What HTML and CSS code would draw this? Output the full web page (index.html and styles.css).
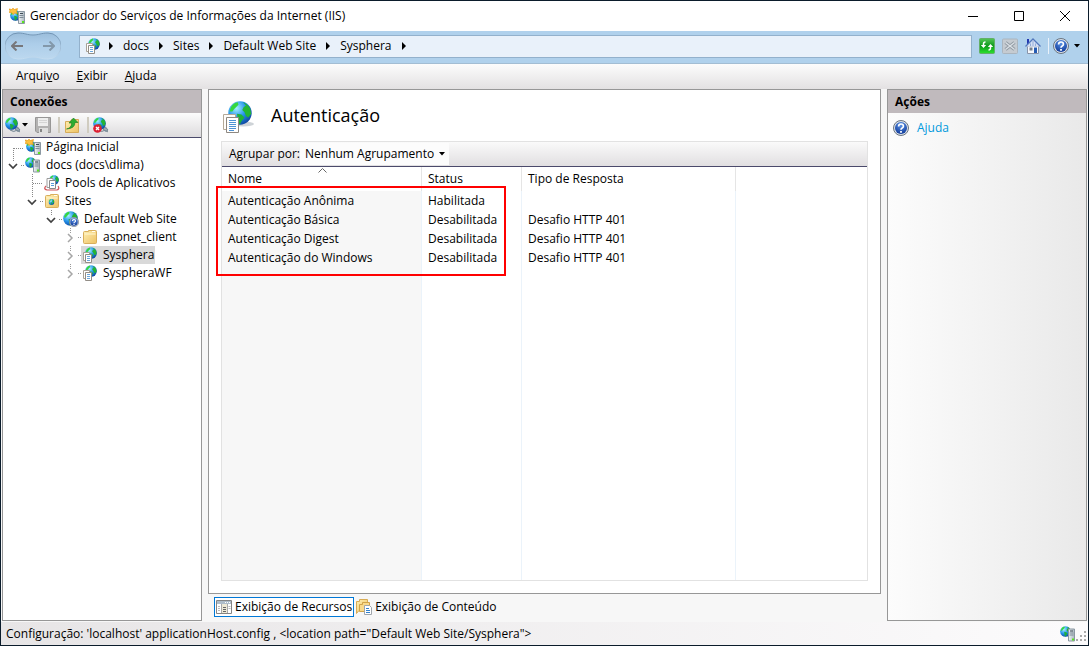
FILE: index.html
```html
<!DOCTYPE html>
<html lang="pt-BR">
<head>
<meta charset="utf-8">
<title>Gerenciador do Serviços de Informações da Internet (IIS)</title>
<link rel="stylesheet" href="styles.css">
</head>
<body>
<svg class="defs" aria-hidden="true">
  <defs>
    <radialGradient id="sea" cx=".35" cy=".3" r=".8"><stop offset="0" stop-color="#a5f0ff"/><stop offset=".5" stop-color="#2493ea"/><stop offset="1" stop-color="#0b3b94"/></radialGradient>
    <radialGradient id="blue" cx=".5" cy=".25" r=".8"><stop offset="0" stop-color="#5d95e8"/><stop offset="1" stop-color="#0b3494"/></radialGradient>
    <linearGradient id="gold" x2="1" y2="1"><stop offset="0" stop-color="#fff0b4"/><stop offset="1" stop-color="#edc163"/></linearGradient>
    <linearGradient id="steel"><stop offset="0" stop-color="#f0f4f7"/><stop offset="1" stop-color="#a9b5be"/></linearGradient>
    <linearGradient id="green" y2="1" x2="0"><stop offset="0" stop-color="#55c558"/><stop offset=".5" stop-color="#0c9a1b"/><stop offset="1" stop-color="#2be32e"/></linearGradient>
    <linearGradient id="well" y2="1" x2="0"><stop offset="0" stop-color="#9bbddb"/><stop offset=".4" stop-color="#accde9"/><stop offset="1" stop-color="#bcd8ef"/></linearGradient>
    <linearGradient id="rim" y2="1" x2="0"><stop offset="0" stop-color="#6f92b2"/><stop offset="1" stop-color="#c5ddf1"/></linearGradient>
    <symbol id="globe" viewBox="0 0 16 16">
      <circle cx="8" cy="8" r="7.800" fill="url(#sea)"/>
      <path d="M2 4Q4 1 6.500.8L7 2.500 5.500 4 4 5.500 3 7 1 7Z" fill="#35d83e"/>
      <path d="M10 .8Q13 1.800 14.800 5L15.500 8.500 13.500 11 12 10 11 7.500 9.500 6 10.500 4 12 3Z" fill="#23b534"/>
      <path d="M6 8.500l3 .5 2 2-2 2.500-1 2Q6 14 6.500 12Z" fill="#1fb13a"/>
    </symbol>
    <symbol id="tower" viewBox="0 0 7 13">
      <path d="M.5.5h6v12h-6z" fill="url(#steel)" stroke="#8b98a2"/>
      <path d="M2 2.500h3" stroke="#3e4c56"/><path d="M1.500 4.500h4M1.500 6.500h4" stroke="#7d8b96"/>
      <path d="M4 10h2v2H4z" fill="#58e51d"/>
    </symbol>
    <symbol id="server" viewBox="0 0 16 16">
      <use href="#globe" x="0" y="0" width="11" height="11"/>
      <use href="#tower" x="8" y="2" width="7" height="14"/>
    </symbol>
    <symbol id="start" viewBox="0 0 16 16">
      <use href="#globe" x="1" y="2" width="11" height="11"/>
      <path d="M0 1l2.500.5L4 .3l1.500 1.200L8.500.6 7.600 3l.6 2.500-2.400-.4L4 6.500 2.800 4.800.3 4.500 1 2.800z" fill="#fcc140" stroke="#e8960f" stroke-width=".7"/>
      <use href="#tower" x="9" y="3" width="7" height="13"/>
    </symbol>
    <symbol id="pages" viewBox="0 0 16 16">
      <use href="#globe" x="3" y="0" width="12" height="12"/>
      <path d="M1.500 5.500h6v8h-6z" fill="#fff" stroke="#a9a297"/>
      <path d="M3.500 7.500h6v8h-6z" fill="#fff" stroke="#928d86"/>
      <path d="M5 9.500h3M5 11.500h3M5 13.500h3" stroke="#6ba6dc"/>
    </symbol>
    <symbol id="pages-large" viewBox="0 0 32 34">
      <ellipse cx="20" cy="24" rx="11" ry="2.500" fill="#b9c0c6" opacity=".7"/>
      <use href="#globe" x="5" y="1" width="24" height="24"/>
      <path d="M.5 14.500h12v15H.5z" fill="#fffdfa" stroke="#b3a998"/>
      <path d="M3.500 17.500h12v15h-12z" fill="#fff" stroke="#8e8880"/>
      <path d="M6 20.500h7M6 22.500h7M6 24.500h7M6 26.500h7M6 28.500h7M6 30.500h5" stroke="#4f93d4"/>
    </symbol>
    <symbol id="pools" viewBox="0 0 16 16">
      <use href="#globe" x="5" y="0" width="10" height="10"/>
      <path d="M3 3.500h6v9H3z" fill="#fff" stroke="#9b9b9b"/>
      <path d="M5.500 5.500h6v8h-6z" fill="#fff" stroke="#8b8b8b"/>
      <path d="M7 8.500h3M7 10.500h3" stroke="#5b9cd8"/>
      <path d="M2 11Q-1 14 3 15h10q3-1 1-4" fill="none" stroke="#d0555a" stroke-width="1.200"/>
    </symbol>
    <symbol id="folder" viewBox="0 0 16 16">
      <path d="M1.500 3.500q0-1 1-1h4v-1h7q1 0 1 1v11q0 1-1 1h-11q-1 0-1-1z" fill="url(#gold)" stroke="#d8ae5c"/>
      <path d="M2.500 5h11" stroke="#fff7d3"/><path d="M10 2.500h3" stroke="#fffdf2"/>
    </symbol>
    <symbol id="sites" viewBox="0 0 16 16"><use href="#folder"/><use href="#globe" x="4.500" y="6" width="6" height="6"/></symbol>
    <symbol id="help" viewBox="0 0 16 16">
      <circle cx="8" cy="8" r="7.500" fill="#dbe1e8" stroke="#6a7480"/>
      <circle cx="8" cy="8" r="6" fill="url(#blue)"/>
      <path d="M5.600 6.500Q5.600 4 8 4t2.400 2.200Q10.400 7.500 8.900 8.200 8 8.700 8 9.800" fill="none" stroke="#fff" stroke-width="1.700"/><path d="M7.100 11h1.800v1.700H7.100z" fill="#fff"/>
    </symbol>
    <symbol id="website" viewBox="0 0 16 16"><use href="#globe" x="0" y="0" width="15" height="15"/><use href="#help" x="6" y="6" width="10" height="10"/></symbol>
    <symbol id="plug" viewBox="0 0 16 16">
      <path d="M5 13q4 3 7 0l3 2M11 9.500l3 3M12.500 10l2.500 3-2 1.500-3-2.500z" fill="#aab7c1" stroke="#788894"/>
      <use href="#globe" x="0" y="0" width="13" height="13"/>
    </symbol>
    <symbol id="unplug" viewBox="0 0 16 16"><use href="#plug"/><circle cx="4.500" cy="11.500" r="4.300" fill="#dc2133"/><path d="M3 10l3 3m0-3l-3 3" stroke="#fff" stroke-width="1.400"/></symbol>
    <symbol id="save" viewBox="0 0 16 16">
      <path d="M.5.5h15v15H2L.5 14z" fill="#b3b2b2" stroke="#979696"/>
      <path d="M3 1h10v8H3z" fill="#eee"/><path d="M4 11h9v5H4z" fill="#dedede"/><path d="M5 12h2v3H5z" fill="#858585"/><path d="M4 3.500h8M4 5.500h8" stroke="#d5d5d5"/>
    </symbol>
    <symbol id="up" viewBox="0 0 16 16">
      <path d="M1.500 4.500h5l1-2h7v13h-13z" fill="url(#gold)" stroke="#d6ac5a"/>
      <path d="M2.500 12q5-1 5.200-6H5L9.500 1 14 5.500h-3q0 6-8.500 6.500z" fill="#2cad31" stroke="#167b1d" stroke-width=".6"/>
    </symbol>
    <symbol id="refresh" viewBox="0 0 16 16">
      <rect x=".5" y=".5" width="15" height="15" rx="1" fill="url(#green)" stroke="#62af68"/>
      <path d="M4.500 8V6q0-2 2-2M11.500 8v2q0 2-2 2" stroke="#fff" stroke-width="1.500" fill="none"/>
      <path d="M1.800 7h5.400L4.500 10zM8.800 9h5.400L11.500 6z" fill="#fff"/>
    </symbol>
    <symbol id="stop" viewBox="0 0 16 16">
      <rect x=".5" y="1" width="15" height="14.500" rx="1" fill="#c5cbd1" stroke="#abb5be"/>
      <path d="M3.500 4.500l9 7M12.500 4.500l-9 7" stroke="#939ca5" stroke-width="3.400"/><path d="M3.500 4.500l9 7M12.500 4.500l-9 7" stroke="#dbe1e6" stroke-width="1.300"/>
    </symbol>
    <symbol id="home" viewBox="0 0 16 16">
      <path d="M2.500 8h11v7.500h-11z" fill="#f5f7fb" stroke="#8994a9"/>
      <path d="M2 1h2v5H2z" fill="#2338b0"/>
      <path d="M.5 8.500L8 1l7.500 7.500" fill="#d4dff3" stroke="#5378bd" stroke-width="1.300"/><path d="M8 3v5M5.500 5.500V8M10.500 5.500V8" stroke="#93acd8"/>
      <path d="M9 9.500h3V15H9z" fill="#245bb3"/><path d="M4.500 9.500h3v3h-3z" fill="#77818d"/>
    </symbol>
    <symbol id="features" viewBox="0 0 16 16">
      <path d="M.5 1.500h15v13H.5z" fill="#fff" stroke="#858585"/><path d="M1 2h14v3H1z" fill="#aebdca"/><path d="M9 3.500h1m1 0h1m1 0h1" stroke="#fff"/>
      <path d="M5.500 5v9M11.500 5v9" stroke="#aaa"/><path d="M6 5h5v9H6z" fill="#eee9d6"/>
      <path d="M2 7.500h2M2 9.500h2M2 11.500h2M12.500 7.500h2M12.500 9.500h2" stroke="#bbb"/><path d="M7 8.500h3M7 10.500h3M7 12.500h3" stroke="#666"/>
    </symbol>
    <symbol id="content" viewBox="0 0 16 16">
      <path d="M.5 2.500h3v-2h8v11H3l-2.500 3z" fill="url(#gold)" stroke="#d8ac55"/>
      <path d="M3.500 5.500h3v-2h7v9h-10z" fill="#f9da8c" stroke="#d0a349"/>
      <path d="M8.500 6.500h5l2 2v7h-7z" fill="#fff" stroke="#a0a6ac"/><path d="M10 9.500h3M10 11.500h4M10 13.500h4" stroke="#3181ce"/>
    </symbol>
    <symbol id="caret-right" viewBox="0 0 6 8"><path d="M1 0l4 4-4 4z"/></symbol>
    <symbol id="caret-down" viewBox="0 0 6 4"><path d="M0 0h6L3 3.500z"/></symbol>
    <symbol id="node-first" viewBox="0 0 20 18"><path d="M9.500 10v8M10 10.500h10" fill="none" stroke="#888" stroke-dasharray="1 1"/></symbol>
    <symbol id="node-leaf" viewBox="0 0 20 18"><path d="M9.500 0v18M10 9.500h10" fill="none" stroke="#888" stroke-dasharray="1 1"/></symbol>
    <symbol id="node-open" viewBox="0 0 20 18"><path d="M9.500 0v5M17 9.500h3" fill="none" stroke="#888" stroke-dasharray="1 1"/><path d="M5 8l4 4 4-4" fill="none" stroke="#404040" stroke-width="1.700"/></symbol>
    <symbol id="node-closed" viewBox="0 0 20 18"><path d="M9.500 0v5M17 9.500h3" fill="none" stroke="#999" stroke-dasharray="1 1"/><path d="M7 6l4 4-4 4" fill="none" stroke="#a6a6a6" stroke-width="1.500"/></symbol>
  </defs>
</svg>

<div class="window">
  <header class="titlebar">
    <svg class="icon"><use href="#start"/></svg>
    <h1 class="title">Gerenciador do Serviços de Informações da Internet (IIS)</h1>
    <div class="window-buttons">
      <button class="window-button" aria-label="Minimizar"><svg viewBox="0 0 10 10"><path d="M0 5.500h10"/></svg></button>
      <button class="window-button" aria-label="Maximizar"><svg viewBox="0 0 10 10"><path d="M.5.500h9v9h-9z"/></svg></button>
      <button class="window-button" aria-label="Fechar"><svg viewBox="0 0 10 10"><path d="M0 0l10 10M10 0L0 10"/></svg></button>
    </div>
  </header>

  <div class="address-row">
    <div class="history">
      <svg class="well" viewBox="0 0 56 28"><path d="M13 1C20 1 22 3 28 3S36 1 43 1a12.500 12.500 0 0 1 0 26C36 27 34 25 28 25S20 27 13 27A12.500 12.500 0 0 1 13 1z" fill="url(#well)" stroke="url(#rim)"/></svg>
      <button aria-label="Voltar"><svg viewBox="0 0 12 10"><path d="M12 5H1M5.500.5L1 5l4.500 4.500"/></svg></button>
      <button aria-label="Avançar"><svg class="forward" viewBox="0 0 12 10"><path d="M0 5h11M6.500.5L11 5 6.500 9.500"/></svg></button>
    </div>
    <nav class="address" aria-label="Local">
      <svg class="icon"><use href="#pages"/></svg>
      <svg class="crumb-arrow"><use href="#caret-right"/></svg><a href="#">docs</a>
      <svg class="crumb-arrow"><use href="#caret-right"/></svg><a href="#">Sites</a>
      <svg class="crumb-arrow"><use href="#caret-right"/></svg><a href="#">Default Web Site</a>
      <svg class="crumb-arrow"><use href="#caret-right"/></svg><a href="#">Sysphera</a>
      <svg class="crumb-arrow"><use href="#caret-right"/></svg>
    </nav>
    <div class="address-tools">
      <button aria-label="Atualizar"><svg class="icon"><use href="#refresh"/></svg></button>
      <button aria-label="Parar"><svg class="icon"><use href="#stop"/></svg></button>
      <button aria-label="Início"><svg class="icon"><use href="#home"/></svg></button>
      <button class="help-button" aria-label="Ajuda"><svg class="icon"><use href="#help"/></svg><svg class="caret"><use href="#caret-down"/></svg></button>
    </div>
  </div>

  <nav class="menu" aria-label="Menu">
    <button>Arqui<u>v</u>o</button><button><u>E</u>xibir</button><button><u>A</u>juda</button>
  </nav>

  <main class="workspace">
    <section class="panel connections">
      <h2 class="panel-title">Conexões</h2>
      <div class="toolbar">
        <button class="connect" aria-label="Conectar"><svg class="icon"><use href="#plug"/></svg><svg class="caret"><use href="#caret-down"/></svg></button>
        <button aria-label="Salvar"><svg class="icon"><use href="#save"/></svg></button>
        <span class="separator"></span>
        <button aria-label="Subir"><svg class="icon"><use href="#up"/></svg></button>
        <span class="separator"></span>
        <button aria-label="Desconectar"><svg class="icon"><use href="#unplug"/></svg></button>
      </div>
      <ul class="tree">
        <li><div class="node"><svg class="branch"><use href="#node-first"/></svg><a href="#"><svg class="icon"><use href="#start"/></svg>Página Inicial</a></div></li>
        <li><div class="node"><button aria-label="Recolher docs"><svg class="branch"><use href="#node-open"/></svg></button><a href="#"><svg class="icon"><use href="#server"/></svg>docs (docs\dlima)</a></div>
          <ul>
            <li><div class="node"><svg class="branch"><use href="#node-leaf"/></svg><a href="#"><svg class="icon"><use href="#pools"/></svg>Pools de Aplicativos</a></div></li>
            <li><div class="node"><button aria-label="Recolher Sites"><svg class="branch"><use href="#node-open"/></svg></button><a href="#"><svg class="icon"><use href="#sites"/></svg>Sites</a></div>
              <ul>
                <li><div class="node"><button aria-label="Recolher Default Web Site"><svg class="branch"><use href="#node-open"/></svg></button><a href="#"><svg class="icon"><use href="#website"/></svg>Default Web Site</a></div>
                  <ul>
                    <li><div class="node"><button aria-label="Expandir aspnet_client"><svg class="branch"><use href="#node-closed"/></svg></button><a href="#"><svg class="icon"><use href="#folder"/></svg>aspnet_client</a></div></li>
                    <li><div class="node"><button aria-label="Expandir Sysphera"><svg class="branch"><use href="#node-closed"/></svg></button><a href="#" class="selected"><svg class="icon"><use href="#pages"/></svg>Sysphera</a></div></li>
                    <li><div class="node"><button aria-label="Expandir SyspheraWF"><svg class="branch"><use href="#node-closed"/></svg></button><a href="#"><svg class="icon"><use href="#pages"/></svg>SyspheraWF</a></div></li>
                  </ul>
                </li>
              </ul>
            </li>
          </ul>
        </li>
      </ul>
    </section>

    <div class="center">
      <section class="panel feature">
        <div class="feature-head">
          <svg class="feature-icon"><use href="#pages-large"/></svg>
          <h2>Autenticação</h2>
        </div>
        <div class="list">
          <div class="group-bar">
            <label for="group">Agrupar por:</label>
            <div class="select-wrap">
              <select id="group"><option>Nenhum Agrupamento</option></select>
              <svg class="caret"><use href="#caret-down"/></svg>
            </div>
          </div>
          <div class="table-area">
            <table>
              <colgroup><col class="col-name"><col class="col-status"><col class="col-type"><col></colgroup>
              <thead><tr><th>Nome<svg class="sort" viewBox="0 0 9 5"><path d="M.5 4.500l4-4 4 4"/></svg></th><th>Status</th><th>Tipo de Resposta</th><th></th></tr></thead>
              <tbody>
                <tr><td>Autenticação Anônima</td><td>Habilitada</td><td></td><td></td></tr>
                <tr><td>Autenticação Básica</td><td>Desabilitada</td><td>Desafio HTTP 401</td><td></td></tr>
                <tr><td>Autenticação Digest</td><td>Desabilitada</td><td>Desafio HTTP 401</td><td></td></tr>
                <tr><td>Autenticação do Windows</td><td>Desabilitada</td><td>Desafio HTTP 401</td><td></td></tr>
                <tr class="rest"><td></td><td></td><td></td><td></td></tr>
              </tbody>
            </table>
            <div class="highlight"></div>
          </div>
        </div>
      </section>
      <div class="view-tabs">
        <button class="view-tab active"><svg class="icon"><use href="#features"/></svg>Exibição de Recursos</button>
        <button class="view-tab"><svg class="icon"><use href="#content"/></svg>Exibição de Conteúdo</button>
      </div>
    </div>

    <aside class="panel actions">
      <h2 class="panel-title">Ações</h2>
      <a href="#" class="action"><svg class="icon"><use href="#help"/></svg>Ajuda</a>
    </aside>
  </main>

  <footer class="status">
    <span>Configuração: 'localhost' applicationHost.config , &lt;location path="Default Web Site/Sysphera"&gt;</span>
    <svg class="icon"><use href="#server"/></svg>
    <svg class="grip" viewBox="0 0 11 11"><path d="M8 0h2v2H8zM4 4h2v2H4zM8 4h2v2H8zM0 8h2v2H0zM4 8h2v2H4zM8 8h2v2H8z"/></svg>
  </footer>
</div>
</body>
</html>
```
FILE: styles.css
```css
* { box-sizing: border-box; }
body { margin: 0; font: 12px/18px "Open Sans", "Noto Sans", sans-serif; color: #000; }
button, select { font: inherit; color: inherit; border: 0; padding: 0; margin: 0; background: none; }
button { display: flex; align-items: center; }
a { color: inherit; text-decoration: none; }
h1, h2, ul { margin: 0; padding: 0; }
ul { list-style: none; }
svg { display: block; flex: none; }
.defs { position: absolute; width: 0; height: 0; }
.icon { width: 16px; height: 16px; }
.caret { width: 6px; height: 4px; }

.window { display: flex; flex-direction: column; min-height: 100vh; border: 1px solid #0b1c2b; background: #f7f7f7; }

.titlebar { display: flex; align-items: center; height: 30px; padding-left: 8px; gap: 5px; background: #fff; }
.title { font-size: 12px; font-weight: 400; }
.window-buttons { display: flex; margin-left: auto; }
.window-button { width: 46px; height: 28px; justify-content: center; }
.window-button svg { width: 10px; height: 10px; overflow: visible; fill: none; stroke: #000; }

.address-row { display: flex; align-items: center; height: 33px; padding: 0 8px 2px 4px; background: #b0d1ec; border-bottom: 1px solid #a3bdd3; }
.history { position: relative; display: flex; align-items: center; justify-content: space-between; width: 56px; height: 28px; padding: 0 6px; margin-right: 18px; }
.history button { position: relative; }
.history button svg { width: 12px; height: 10px; fill: none; stroke: #77777b; stroke-width: 2; }
.history .forward { stroke: #8398aa; }
.history .well { position: absolute; inset: 0; width: 56px; height: 28px; }
.address { display: flex; flex: 1; align-items: center; height: 23px; padding-left: 5px; border: 1px solid #93b1cc; background: #e9f1fa; }
.crumb-arrow { width: 6px; height: 8px; margin: 0 9px; }
.address .icon + .crumb-arrow { margin-left: 7px; }
.address-tools { display: flex; align-items: center; gap: 7px; padding-left: 7px; }
.help-button { gap: 5px; padding-left: 4px; border-left: 1px solid #e9f1fa; }

.menu { display: flex; gap: 17px; height: 25px; padding: 0 15px 1px; background: linear-gradient(#fcfcfc, #e3e1e2); }

.workspace { display: grid; grid-template-columns: 200px 1fr 200px; flex: 1; gap: 6px; padding: 0 1px 1px; }
.panel { border: 1px solid #979797; background: #fff; }
.panel-title { height: 23px; padding-left: 7px; font-size: 12px; line-height: 23px; background: #c0babd; }

.toolbar { display: flex; align-items: center; gap: 7px; height: 25px; padding: 0 2px; border-bottom: 1px solid #4b4a6b; background: linear-gradient(#fcfcfc, #dddbdd); }
.connect { gap: 1px; }
.separator { width: 2px; height: 16px; background: #d0ccc0; }
.toolbar .separator + button { margin-left: -3px; }

.tree ul { padding-left: 19px; }
.tree > li { padding-left: 1px; }
.node { display: flex; align-items: center; height: 18px; white-space: nowrap; }
.branch { width: 20px; height: 18px; }
.node a { display: flex; align-items: center; gap: 5px; padding: 0 1px; }
.selected { background: #d9d9d9; }

.center { display: flex; flex-direction: column; min-width: 0; }
.feature { display: flex; flex-direction: column; flex: 1; padding: 10px 12px 12px; }
.feature-head { display: flex; align-items: flex-start; gap: 16px; height: 41px; padding: 0 2px; }
.feature-icon { width: 32px; height: 34px; }
.feature-head h2 { font-size: 18px; font-weight: 400; line-height: 30px; }
.list { display: flex; flex-direction: column; flex: 1; border: 1px solid #e2e2e2; }
.group-bar { display: flex; align-items: center; height: 25px; padding-left: 7px; border-bottom: 1px solid #4b4a6b; background: linear-gradient(#fafafa, #e1dfe1); }
.select-wrap { display: flex; align-items: center; height: 22px; padding-right: 4px; background: #fcfcfc; }
.select-wrap select { width: 139px; height: 22px; padding-left: 5px; appearance: none; }

.table-area { position: relative; flex: 1; }
table { width: 100%; height: 100%; border-collapse: separate; border-spacing: 0; table-layout: fixed; }
.col-name { width: 200px; }
.col-status { width: 100px; }
.col-type { width: 214px; }
th { position: relative; height: 24px; padding: 0 6px; font-weight: 400; text-align: left; border-right: 1px solid #e5e5e5; }
td { height: 19px; padding: 0 6px; border-right: 1px solid #ebf3fa; }
td:first-child { background: #f7f7f7; }
th:last-child, td:last-child { border-right: 0; }
.rest td { height: auto; }
.sort { position: absolute; top: 1px; left: 96px; width: 9px; height: 5px; fill: none; stroke: #666; }
.highlight { position: absolute; top: 19px; left: -6px; width: 290px; height: 90px; border: 2px solid #f00; pointer-events: none; }

.view-tabs { display: flex; align-items: center; height: 27px; padding: 0 0 2px 6px; }
.view-tab { gap: 3px; height: 20px; padding: 0 1px; border: 1px solid transparent; }
.view-tab.active { border-color: #0078d7; background: #fff; }

.actions { background: linear-gradient(90deg, #fcfcfc, #e9e9e9); }
.action { display: flex; align-items: center; gap: 8px; height: 30px; padding: 0 5px; color: #0099dc; }

.status { display: flex; align-items: center; height: 23px; padding: 0 1px 0 5px; background: linear-gradient(90deg, #e7e5e6, #fcfbfc); }
.status .icon { margin-left: auto; }
.grip { width: 11px; height: 11px; margin-top: 5px; fill: #aaa; }
```
